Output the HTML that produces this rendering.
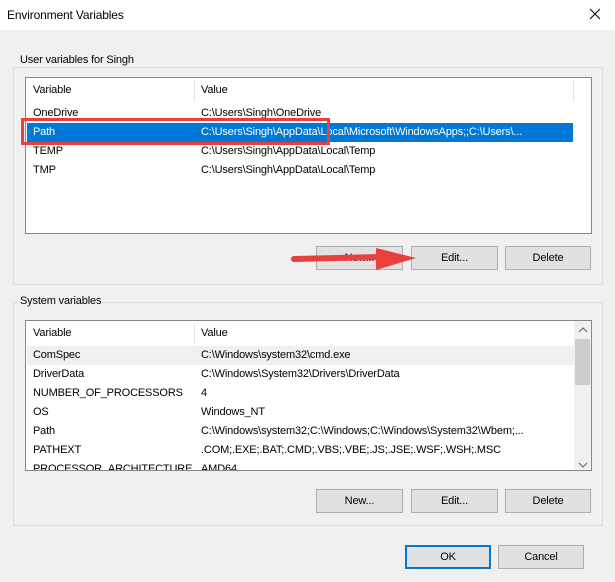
<!DOCTYPE html><html><head><style>
*{margin:0;padding:0;box-sizing:border-box}
body{width:615px;height:582px;background:#f0f0f0;font-family:"Liberation Sans",sans-serif;font-size:11px;letter-spacing:-0.15px;color:#000;position:relative;overflow:hidden}
.a{position:absolute;white-space:nowrap}
.grp{position:absolute;border:1px solid #dcdcdc}
.lbl{position:absolute;background:#f0f0f0;padding:0 2px}
.list{position:absolute;background:#fff;border:1px solid #828790;overflow:hidden}
.btn{position:absolute;background:#e1e1e1;border:1px solid #adadad;text-align:center;line-height:22px;height:24px}
.row{position:absolute;left:0;height:19px;line-height:19px}
</style></head><body>
<div class="a" style="left:0;top:0;width:615px;height:30px;background:#fff"></div>
<div class="a" style="left:7px;top:8px;font-size:12px">Environment Variables</div>
<svg class="a" style="left:589px;top:8px" width="12" height="12"><path d="M1 1L11 11M11 1L1 11" stroke="#000" stroke-width="1"/></svg>

<div class="grp" style="left:13px;top:67px;width:590px;height:218px"></div>
<div class="lbl a" style="left:18px;top:54px">User variables for Singh</div>
<div class="list" style="left:25px;top:77px;width:567px;height:157px">
 <div class="a" style="left:168px;top:2px;width:1px;height:22px;background:#e5e5e5"></div>
 <div class="a" style="left:547px;top:2px;width:1px;height:22px;background:#e5e5e5"></div>
 <div class="a" style="left:7px;top:6px">Variable</div><div class="a" style="left:175px;top:6px">Value</div>
 <div class="row" style="top:26px"><span class="a" style="left:7px">OneDrive</span><span class="a" style="left:175px">C:\Users\Singh\OneDrive</span></div>
 <div class="row" style="top:45px;left:1px;width:546px;background:#0078d7;color:#fff"><span class="a" style="left:6px">Path</span><span class="a" style="left:174px">C:\Users\Singh\AppData\Local\Microsoft\WindowsApps;;C:\Users\...</span></div>
 <div class="row" style="top:64px"><span class="a" style="left:7px">TEMP</span><span class="a" style="left:175px">C:\Users\Singh\AppData\Local\Temp</span></div>
 <div class="row" style="top:83px"><span class="a" style="left:7px">TMP</span><span class="a" style="left:175px">C:\Users\Singh\AppData\Local\Temp</span></div>
</div>
<div class="a" style="left:21px;top:118px;width:309px;height:27px;border:3px solid #e8403f"></div>
<div class="btn" style="left:316px;top:246px;width:87px">New...</div>
<div class="btn" style="left:411px;top:246px;width:87px">Edit...</div>
<div class="btn" style="left:505px;top:246px;width:86px">Delete</div>
<svg class="a" style="left:288px;top:246px" width="132" height="28"><path d="M6 13 L92 11" stroke="#e8403f" stroke-width="6" stroke-linecap="round"/><path d="M88 2 L128 12 L88 24 Z" fill="#e8403f"/></svg>

<div class="grp" style="left:13px;top:302px;width:590px;height:224px"></div>
<div class="lbl a" style="left:18px;top:295px">System variables</div>
<div class="list" style="left:25px;top:320px;width:567px;height:151px">
 <div class="a" style="left:168px;top:2px;width:1px;height:22px;background:#e5e5e5"></div>
 <div class="a" style="left:7px;top:6px">Variable</div><div class="a" style="left:175px;top:6px">Value</div>
 <div class="a" style="left:548px;top:0;width:17px;height:149px;background:#f0f0f0"></div>
 <div class="a" style="left:549px;top:18px;width:15px;height:46px;background:#cdcdcd"></div>
 <svg class="a" style="left:552px;top:6px" width="10" height="6"><path d="M1 5L5 1L9 5" stroke="#606060" fill="none"/></svg>
 <svg class="a" style="left:552px;top:141px" width="10" height="6"><path d="M1 1L5 5L9 1" stroke="#606060" fill="none"/></svg>
 <div class="row" style="top:25px;left:1px;width:547px;background:#f0f0f0"></div>
 <div class="row" style="top:25px"><span class="a" style="left:7px">ComSpec</span><span class="a" style="left:175px">C:\Windows\system32\cmd.exe</span></div>
 <div class="row" style="top:44px"><span class="a" style="left:7px">DriverData</span><span class="a" style="left:175px">C:\Windows\System32\Drivers\DriverData</span></div>
 <div class="row" style="top:63px"><span class="a" style="left:7px">NUMBER_OF_PROCESSORS</span><span class="a" style="left:175px">4</span></div>
 <div class="row" style="top:82px"><span class="a" style="left:7px">OS</span><span class="a" style="left:175px">Windows_NT</span></div>
 <div class="row" style="top:101px"><span class="a" style="left:7px">Path</span><span class="a" style="left:175px">C:\Windows\system32;C:\Windows;C:\Windows\System32\Wbem;...</span></div>
 <div class="row" style="top:120px"><span class="a" style="left:7px">PATHEXT</span><span class="a" style="left:175px">.COM;.EXE;.BAT;.CMD;.VBS;.VBE;.JS;.JSE;.WSF;.WSH;.MSC</span></div>
 <div class="row" style="top:139px"><span class="a" style="left:7px">PROCESSOR_ARCHITECTURE</span><span class="a" style="left:175px">AMD64</span></div>
</div>
<div class="btn" style="left:316px;top:489px;width:87px">New...</div>
<div class="btn" style="left:411px;top:489px;width:87px">Edit...</div>
<div class="btn" style="left:505px;top:489px;width:86px">Delete</div>
<div class="btn" style="left:405px;top:545px;width:86px;border:2px solid #0078d7;line-height:20px">OK</div>
<div class="btn" style="left:498px;top:545px;width:86px">Cancel</div>
</body></html>
